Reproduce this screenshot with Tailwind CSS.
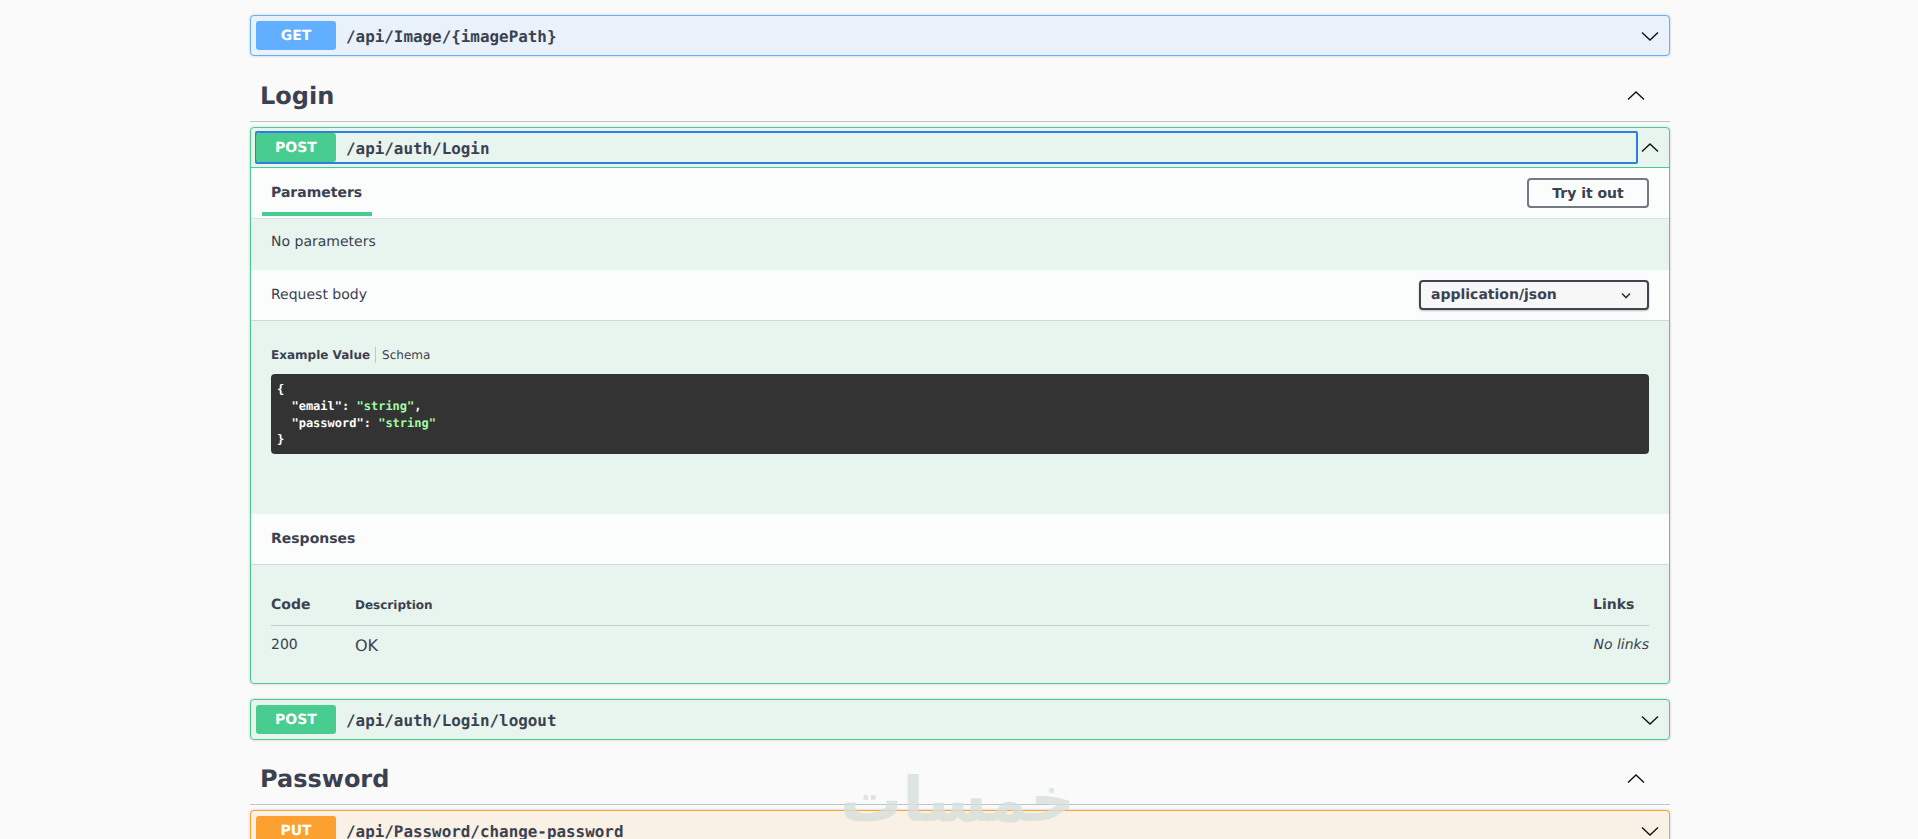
<!DOCTYPE html>
<html lang="en">
<head>
<meta charset="UTF-8">
<title>Swagger UI</title>
<script src="https://cdn.jsdelivr.net/npm/@tailwindcss/browser@4"></script>
</head>
<body class="bg-[#fafafa] overflow-hidden font-['DejaVu_Sans',sans-serif] text-[#3b4151] [text-rendering:geometricPrecision]">
<div class="relative h-[839px] overflow-hidden">
  <div class="w-[1420px] ml-[250px]">
    <!-- end of the row above the fold -->
    <div class="h-0 shadow-[0_0_3px_rgba(0,0,0,0.19)]"></div>

    <!-- GET image -->
    <div class="mt-[15px] h-[41px] flex items-center border border-[#61affe] bg-[#e9f2fa] rounded shadow-[0_0_3px_rgba(0,0,0,0.19)] pl-[5px] pr-[9px]">
      <span class="w-20 h-[29px] shrink-0 flex items-center justify-center rounded-[3px] bg-[#61affe] text-white text-sm font-bold">GET</span>
      <span class="ml-[10px] mt-[2px] flex-1 font-['DejaVu_Sans_Mono',monospace] font-semibold text-[15.9px]">/api/Image/{imagePath}</span>
      <svg class="w-5 h-5" viewBox="0 0 20 20"><path d="M2 6.5l8 7.5 8-7.5" fill="none" stroke="#111" stroke-width="1.4"/></svg>
    </div>

    <!-- Login -->
    <div class="h-[66px] flex items-center justify-between border-b border-[#3b4151]/30 pl-[10px] pr-6 pt-[15px]">
      <h3 class="text-2xl font-bold">Login</h3>
      <svg class="w-5 h-5" viewBox="0 0 20 20"><path d="M2 13.5l8-7.5 8 7.5" fill="none" stroke="#111" stroke-width="1.4"/></svg>
    </div>

    <!-- POST login, expanded -->
    <div class="mt-[5px] h-[557px] border border-[#49cc90] bg-[#e8f5ee] rounded shadow-[0_0_3px_rgba(0,0,0,0.19)] flex flex-col">
      <div class="h-[40px] shrink-0 flex items-center border-b border-[#49cc90] pl-1 pr-[9px]">
        <div class="flex-1 h-[33px] flex items-center outline-2 outline-[#2f7fe0] -outline-offset-2 pl-[1px] mr-[2px] rounded-[2px]">
          <span class="relative z-10 w-20 h-[29px] shrink-0 flex items-center justify-center rounded-[3px] bg-[#49cc90] text-white text-sm font-bold">POST</span>
          <span class="ml-[10px] mt-[2px] font-['DejaVu_Sans_Mono',monospace] font-semibold text-[15.9px]">/api/auth/Login</span>
        </div>
        <svg class="w-5 h-5 shrink-0" viewBox="0 0 20 20"><path d="M2 13.5l8-7.5 8 7.5" fill="none" stroke="#111" stroke-width="1.4"/></svg>
      </div>

      <!-- Parameters tab -->
      <div class="h-[51px] shrink-0 flex items-center justify-between bg-white/80 border-b border-[#3b4151]/15 pl-[11px] pr-5">
        <div class="relative h-full w-[110px] flex items-center pl-[9px]">
          <span class="text-sm font-bold mb-[1px]">Parameters</span>
          <span class="absolute left-0 bottom-[2px] w-[110px] h-1 bg-[#49cc90]"></span>
        </div>
        <button class="w-[122px] h-[30px] border-2 border-[#3b4151]/70 rounded text-sm font-bold">Try it out</button>
      </div>
      <div class="h-[51px] shrink-0 flex items-center px-5 pb-[5px]">
        <span class="text-sm">No parameters</span>
      </div>

      <!-- Request body -->
      <div class="h-[51px] shrink-0 flex items-center justify-between bg-white/80 border-b border-[#3b4151]/20 px-5">
        <span class="text-sm mb-[1px]">Request body</span>
        <div class="w-[230px] h-[30px] flex items-center justify-between border-2 border-[#41444e] rounded bg-[#f7f7f7] shadow-[0_1px_2px_rgba(0,0,0,0.25)] pl-[10px] pr-[15px]">
          <span class="text-sm font-bold mb-[1px]">application/json</span>
          <svg class="w-3 h-3" viewBox="0 0 12 12"><path d="M2 4.5l4 4 4-4" fill="none" stroke="#333" stroke-width="1.6"/></svg>
        </div>
      </div>

      <div class="h-[193px] shrink-0 px-5 pt-[26px]">
        <div class="flex items-center text-xs h-[16px]">
          <span class="font-bold pr-[5px] border-r border-[#3b4151]/25">Example Value</span>
          <span class="pl-[6px]">Schema</span>
        </div>
        <pre class="mt-[11px] h-[80px] bg-[#333] rounded text-white font-['DejaVu_Sans_Mono',monospace] font-semibold text-xs leading-[16.8px] px-[6px] pt-[7px]">{
  "email": <span class="text-[#a2fca2]">"string"</span>,
  "password": <span class="text-[#a2fca2]">"string"</span>
}</pre>
      </div>

      <!-- Responses -->
      <div class="h-[51px] shrink-0 flex items-center bg-white/80 border-b border-[#3b4151]/20 px-5">
        <span class="text-sm font-bold">Responses</span>
      </div>
      <div class="flex-1 px-5 pt-4">
        <div class="h-[45px] flex items-center border-b border-[#3b4151]/20 pt-[3px]">
          <span class="w-[84px] text-sm font-bold">Code</span>
          <span class="flex-1 text-xs font-bold">Description</span>
          <span class="w-[56px] text-sm font-bold">Links</span>
        </div>
        <div class="flex items-start pt-[10px]">
          <span class="w-[84px] text-sm leading-[18px]">200</span>
          <span class="flex-1 text-base leading-[20px]">OK</span>
          <span class="w-[56px] text-sm italic leading-[18px] text-right whitespace-nowrap">No links</span>
        </div>
      </div>
    </div>

    <!-- POST logout -->
    <div class="mt-[15px] h-[41px] flex items-center border border-[#49cc90] bg-[#e8f5ee] rounded shadow-[0_0_3px_rgba(0,0,0,0.19)] pl-[5px] pr-[9px]">
      <span class="w-20 h-[29px] shrink-0 flex items-center justify-center rounded-[3px] bg-[#49cc90] text-white text-sm font-bold">POST</span>
      <span class="ml-[10px] mt-[2px] flex-1 font-['DejaVu_Sans_Mono',monospace] font-semibold text-[15.9px]">/api/auth/Login/logout</span>
      <svg class="w-5 h-5" viewBox="0 0 20 20"><path d="M2 6.5l8 7.5 8-7.5" fill="none" stroke="#111" stroke-width="1.4"/></svg>
    </div>

    <!-- Password -->
    <div class="h-[65px] flex items-center justify-between border-b border-[#3b4151]/30 pl-[10px] pr-6 pt-[14px]">
      <h3 class="text-2xl font-bold">Password</h3>
      <svg class="w-5 h-5" viewBox="0 0 20 20"><path d="M2 13.5l8-7.5 8 7.5" fill="none" stroke="#111" stroke-width="1.4"/></svg>
    </div>

    <div class="mt-[5px] h-[41px] flex items-center border border-[#fca130] bg-[#f9f1e5] rounded shadow-[0_0_3px_rgba(0,0,0,0.19)] pl-[5px] pr-[9px]">
      <span class="w-20 h-[29px] shrink-0 flex items-center justify-center rounded-[3px] bg-[#fca130] text-white text-sm font-bold">PUT</span>
      <span class="ml-[10px] mt-[2px] flex-1 font-['DejaVu_Sans_Mono',monospace] font-semibold text-[15.9px]">/api/Password/change-password</span>
      <svg class="w-5 h-5" viewBox="0 0 20 20"><path d="M2 6.5l8 7.5 8-7.5" fill="none" stroke="#111" stroke-width="1.4"/></svg>
    </div>
  </div>

  <!-- watermark -->
  <div dir="rtl" lang="ar" class="absolute left-[843px] top-[762px] w-[232px] text-center text-[62px] leading-[76px] font-bold text-[#d6dedb]/80 whitespace-nowrap pointer-events-none">خمسات</div>
</div>
</body>
</html>
